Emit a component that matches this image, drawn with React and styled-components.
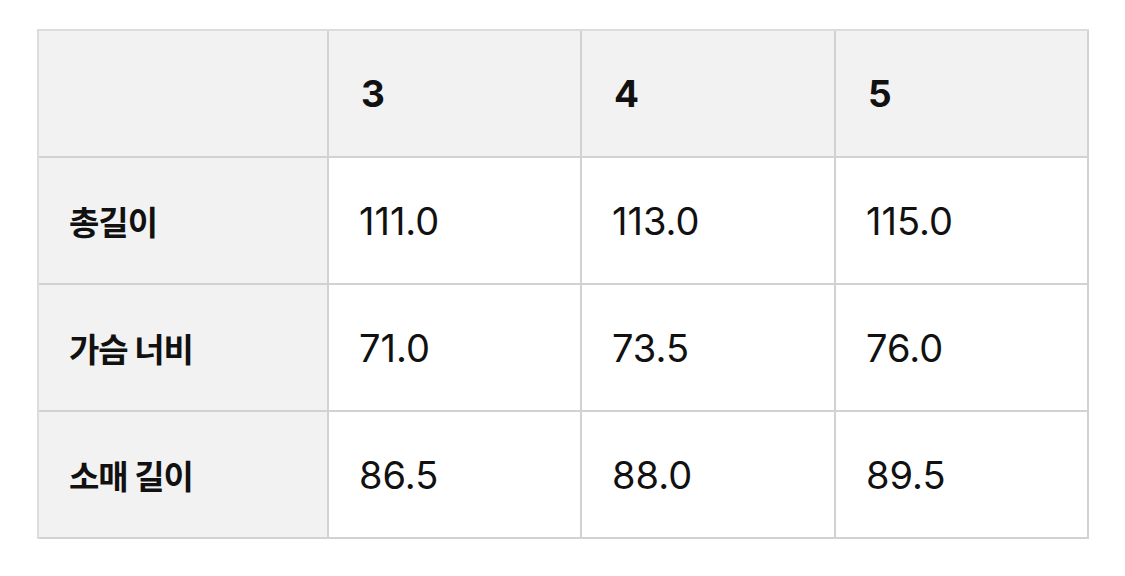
import React from 'react';
import styled, { createGlobalStyle } from 'styled-components';

const GlobalStyle = createGlobalStyle`
  body {
    margin: 0;
    background: #ffffff;
    font-family: "Inter", "Noto Sans CJK KR", sans-serif;
  }
`

const sizes = ['3', '4', '5']

const rows = [
  { label: '총길이', values: ['111.0', '113.0', '115.0'] },
  { label: '가슴 너비', values: ['71.0', '73.5', '76.0'] },
  { label: '소매 길이', values: ['86.5', '88.0', '89.5'] },
]

function App() {
  return (
    <>
      <GlobalStyle />
      <Page>
        <Grid>
          <Cell $shade />
          {sizes.map((s) => (
            <SizeHead key={s}>{s}</SizeHead>
          ))}
          {rows.map((r) => (
            <React.Fragment key={r.label}>
              <RowHead>{r.label}</RowHead>
              {r.values.map((v, i) => (
                <Value key={i}>{v}</Value>
              ))}
            </React.Fragment>
          ))}
        </Grid>
      </Page>
    </>
  );
}

const Page = styled.div`
  padding: 29px 0 0 37px;
`

const Grid = styled.div`
  display: grid;
  grid-template-columns: 290px 253px 254px 253px;
  grid-auto-rows: 127px;
  width: max-content;
  border-top: 2px solid #dcdcdc;
  border-left: 2px solid #dcdcdc;
`

const Cell = styled.div`
  display: flex;
  align-items: center;
  box-sizing: border-box;
  border-right: 2px solid #d2d2d2;
  border-bottom: 2px solid #d2d2d2;
  background: ${(p) => (p.$shade ? '#f2f2f2' : '#ffffff')};
  color: #111;
`

const SizeHead = styled(Cell).attrs({ $shade: true })`
  padding-left: 32px;
  font-family: "Inter", sans-serif;
  font-size: 37px;
  font-weight: 700;
`

const RowHead = styled(Cell).attrs({ $shade: true })`
  padding-left: 30px;
  font-family: "Noto Sans CJK KR", sans-serif;
  font-size: 33px;
  font-weight: 700;
  letter-spacing: -1px;
`

const Value = styled(Cell)`
  padding-left: 30px;
  font-family: "Inter", sans-serif;
  font-size: 38px;
  font-weight: 400;
`

export default App;
